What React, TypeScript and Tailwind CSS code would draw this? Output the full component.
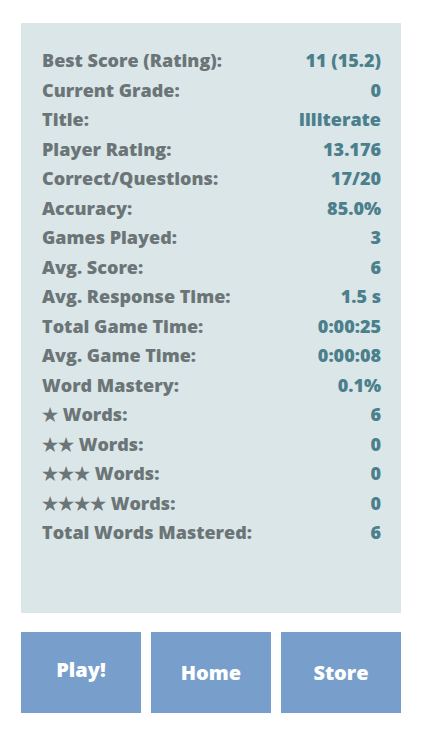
import React from 'react';

const stats: [string, string][] = [
  ['Best Score (Rating):', '11 (15.2)'],
  ['Current Grade:', '0'],
  ['Title:', 'Illiterate'],
  ['Player Rating:', '13.176'],
  ['Correct/Questions:', '17/20'],
  ['Accuracy:', '85.0%'],
  ['Games Played:', '3'],
  ['Avg. Score:', '6'],
  ['Avg. Response Time:', '1.5 s'],
  ['Total Game Time:', '0:00:25'],
  ['Avg. Game Time:', '0:00:08'],
  ['Word Mastery:', '0.1%'],
  ['★ Words:', '6'],
  ['★★ Words:', '0'],
  ['★★★ Words:', '0'],
  ['★★★★ Words:', '0'],
  ['Total Words Mastered:', '6'],
];

export default function App() {
  return (
    <div className="w-[422px] h-[750px] bg-white px-[21px] pt-[23px] font-['Open_Sans',sans-serif] font-extrabold">
      <div className="h-[590px] bg-[#dbe6e8] pl-[21px] pr-[20px] pt-[23px]">
        {stats.map(([label, value]) => (
          <div key={label} className="flex justify-between items-center h-[29.5px] text-[18px]">
            <span className="text-[#6b7577]">{label}</span>
            <span className="text-[#4b7f8c]">{value}</span>
          </div>
        ))}
      </div>
      <div className="grid grid-cols-3 gap-[10px] mt-[19px]">
        <button className="h-[81px] bg-[#789fcb] text-white text-[20px] font-extrabold pb-[6px]">Play!</button>
        <button className="h-[81px] bg-[#789fcb] text-white text-[20px] font-extrabold">Home</button>
        <button className="h-[81px] bg-[#789fcb] text-white text-[20px] font-extrabold">Store</button>
      </div>
    </div>
  );
}
